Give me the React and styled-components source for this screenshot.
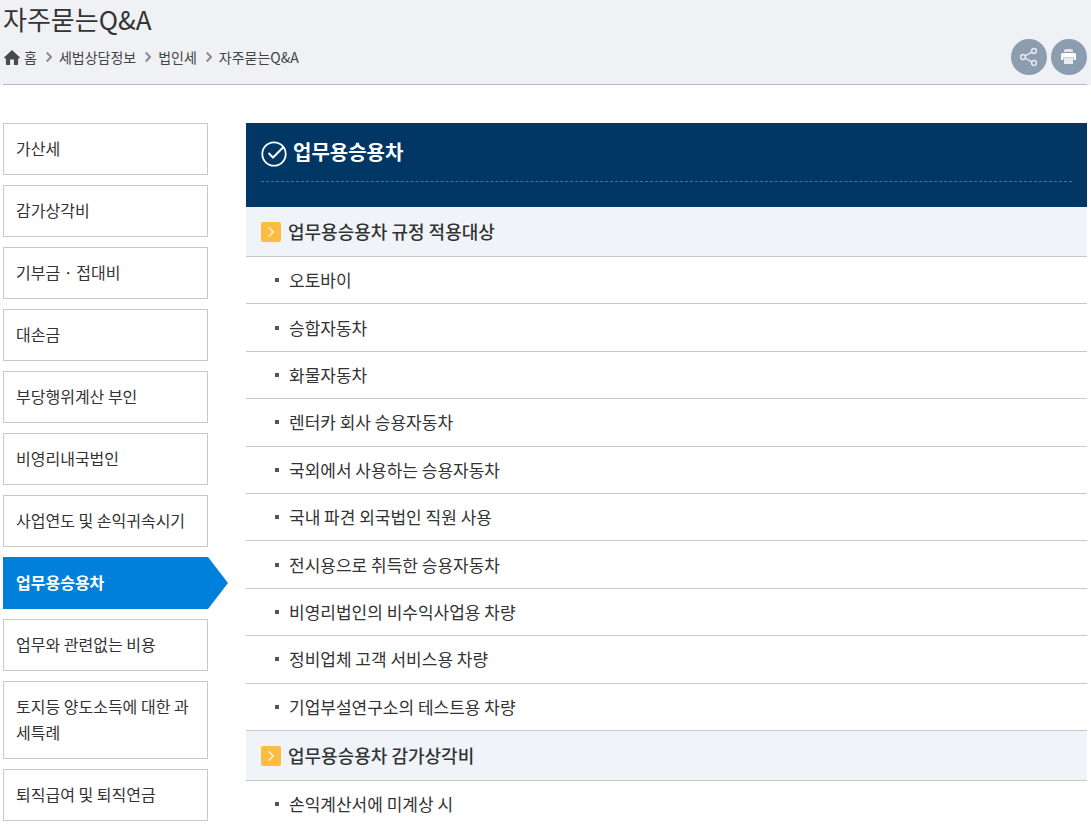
import React from "react";
import styled, { createGlobalStyle, css } from "styled-components";

const GlobalStyle = createGlobalStyle`
  *, *::before, *::after { box-sizing: border-box; }
  body {
    margin: 0;
    background: #fff;
    color: #333;
    font-family: "Noto Sans CJK KR", "Noto Sans", sans-serif;
    font-size: 16px;
    line-height: 26px;
  }
  ul, ol { list-style: none; margin: 0; padding: 0; }
  h1, h2, h3 { margin: 0; }
  a { color: inherit; text-decoration: none; }
`;

const PageHeader = styled.header`
  padding: 0 4px 0 3px;
  background: #eff1f5;
`;

const HeaderInner = styled.div`
  display: flex;
  justify-content: space-between;
  align-items: flex-end;
  padding-bottom: 9px;
  border-bottom: 1px solid #b2b6c0;
`;

const PageTitle = styled.h1`
  font-size: 26px;
  font-weight: 400;
  line-height: 38px;
`;

const Breadcrumb = styled.ol`
  display: flex;
  align-items: center;
  padding: 6px 0 5px 1px;
  color: #444;
  font-size: 14px;
  line-height: 26px;
`;

const Crumb = styled.li`
  display: flex;
  align-items: center;

  a {
    display: flex;
    align-items: center;
    gap: 4px;
  }
`;

const CrumbArrow = styled.svg`
  width: 6px;
  height: 12px;
  margin: 0 7px 0 9px;
  fill: none;
  stroke: #8a8d94;
  stroke-width: 2;
`;

const HomeIcon = styled.svg`
  width: 16px;
  height: 15px;
  fill: #4a4a4a;
`;

const Tools = styled.div`
  display: flex;
  gap: 4px;
`;

const RoundButton = styled.button`
  width: 36px;
  height: 36px;
  padding: 0;
  border: 0;
  border-radius: 50%;
  background: #8c9db0;
  cursor: pointer;

  svg { display: block; }
`;

const Body = styled.div`
  display: flex;
  align-items: flex-start;
  gap: 38px;
  padding: 38px 4px 5px 3px;
`;

const SideNav = styled.nav`
  flex: 0 0 205px;

  ul {
    display: flex;
    flex-direction: column;
    gap: 10px;
  }
`;

const SideLink = styled.a`
  position: relative;
  display: block;
  padding: 11px 12px 13px;
  border: 1px solid #c8c8c8;
  background: #fff;

  ${({ $active }) =>
    $active &&
    css`
      border-color: #0080db;
      background: #0080db;
      color: #fff;
      font-weight: 700;

      &::after {
        content: "";
        position: absolute;
        top: -1px;
        bottom: -1px;
        left: 100%;
        width: 21px;
        background: #0080db;
        clip-path: polygon(0 0, 1px 0, 100% 50%, 1px 100%, 0 100%);
      }
    `}
`;

const Content = styled.main`
  flex: 1;
  min-width: 0;
`;

const Banner = styled.div`
  padding: 14px 15px 25px;
  background: #003764;
`;

const BannerTitle = styled.h2`
  display: flex;
  align-items: center;
  gap: 6px;
  padding-bottom: 14px;
  border-bottom: 1px dashed #4d7399;
  color: #fff;
  font-size: 20px;
  font-weight: 700;
  line-height: 30px;
`;

const CheckIcon = styled.svg`
  width: 26px;
  height: 26px;
  margin-top: 4px;
  fill: none;
  stroke: #fff;
  stroke-width: 2;
`;

const SectionTitle = styled.h3`
  display: flex;
  align-items: center;
  gap: 7px;
  padding: 11px 15px 12px;
  border-bottom: 1px solid #c8c8c8;
  background: #f0f4f9;
  font-size: 18px;
  font-weight: 500;
  line-height: 26px;
`;

const SectionIcon = styled.svg`
  width: 20px;
  height: 20px;
  margin-top: 2px;
`;

const QuestionList = styled.ul`
  display: grid;
  grid-auto-rows: 1fr;
  min-height: ${({ $minHeight }) => $minHeight}px;
`;

const Question = styled.li`
  display: flex;
  align-items: center;
  padding: 10px 15px 10px 29px;
  border-bottom: 1px solid #c8c8c8;
  font-size: 17px;
  line-height: 26px;

  &::before {
    content: "";
    width: 4px;
    height: 4px;
    margin-right: 10px;
    background: #555;
  }
`;

const crumbs = ["홈", "세법상담정보", "법인세", "자주묻는Q&A"];

const categories = [
  "가산세",
  "감가상각비",
  "기부금 · 접대비",
  "대손금",
  "부당행위계산 부인",
  "비영리내국법인",
  "사업연도 및 손익귀속시기",
  "업무용승용차",
  "업무와 관련없는 비용",
  "토지등 양도소득에 대한 과세특례",
  "퇴직급여 및 퇴직연금",
];

const sections = [
  {
    title: "업무용승용차 규정 적용대상",
    minHeight: 474,
    questions: [
      "오토바이",
      "승합자동차",
      "화물자동차",
      "렌터카 회사 승용자동차",
      "국외에서 사용하는 승용자동차",
      "국내 파견 외국법인 직원 사용",
      "전시용으로 취득한 승용자동차",
      "비영리법인의 비수익사업용 차량",
      "정비업체 고객 서비스용 차량",
      "기업부설연구소의 테스트용 차량",
    ],
  },
  {
    title: "업무용승용차 감가상각비",
    minHeight: 47,
    questions: ["손익계산서에 미계상 시"],
  },
];

export default function App() {
  return (
    <>
      <GlobalStyle />
      <PageHeader>
        <HeaderInner>
          <div>
            <PageTitle>자주묻는Q&amp;A</PageTitle>
            <Breadcrumb>
              {crumbs.map((label, i) => (
                <Crumb key={label}>
                  {i > 0 && (
                    <CrumbArrow viewBox="0 0 6 12" aria-hidden="true">
                      <path d="M0.7 1.5 L5 6 L0.7 10.5" />
                    </CrumbArrow>
                  )}
                  <a href="#">
                    {i === 0 && (
                      <HomeIcon viewBox="0 0 17 15" preserveAspectRatio="none" aria-hidden="true">
                        <path d="M8.5 0 L17 7.6 L16 8.7 L15 7.9 V14 Q15 15 14 15 H10.5 V9.5 H6.5 V15 H3 Q2 15 2 14 V7.9 L1 8.7 L0 7.6 Z" />
                      </HomeIcon>
                    )}
                    {label}
                  </a>
                </Crumb>
              ))}
            </Breadcrumb>
          </div>
          <Tools>
            <RoundButton type="button" aria-label="공유">
              <svg width="36" height="36" viewBox="0 0 36 36" fill="none" stroke="#e6eaef" strokeWidth="1.5">
                <circle cx="12" cy="18" r="2.4" />
                <circle cx="23" cy="12" r="2.4" />
                <circle cx="23" cy="24" r="2.4" />
                <path d="M14.2 16.8 L20.9 13.2 M14.2 19.2 L20.9 22.8" />
              </svg>
            </RoundButton>
            <RoundButton type="button" aria-label="인쇄">
              <svg width="36" height="36" viewBox="0 0 36 36">
                <path fill="#dfe5eb" d="M13 12 Q13 10 15 10 H20 Q22 10 22 12 V13 H13 Z" />
                <path fill="#fff" d="M11.5 14 H23.5 Q25 14 25 15.5 V21 H22.7 V18.5 H12.3 V21 H10 V15.5 Q10 14 11.5 14 Z" />
                <path fill="#e9edf1" d="M13 19 H22 V25 H13 Z" />
              </svg>
            </RoundButton>
          </Tools>
        </HeaderInner>
      </PageHeader>
      <Body>
        <SideNav aria-label="법인세">
          <ul>
            {categories.map((label) => {
              const active = label === "업무용승용차";
              return (
                <li key={label}>
                  <SideLink href="#" $active={active} aria-current={active ? "page" : undefined}>
                    {label}
                  </SideLink>
                </li>
              );
            })}
          </ul>
        </SideNav>
        <Content>
          <Banner>
            <BannerTitle>
              <CheckIcon viewBox="0 0 26 26" aria-hidden="true">
                <circle cx="13" cy="13" r="11.7" strokeWidth="1.8" />
                <path d="M7.5 12 L12 16.5 L22.5 6" />
              </CheckIcon>
              업무용승용차
            </BannerTitle>
          </Banner>
          {sections.map((section) => (
            <section key={section.title}>
              <SectionTitle>
                <SectionIcon viewBox="0 0 20 20" aria-hidden="true">
                  <rect width="20" height="20" rx="2" fill="#fdbc40" />
                  <path d="M7.7 5.5 L12.2 10 L7.7 14.5" fill="none" stroke="#fff3d6" strokeWidth="1.5" />
                </SectionIcon>
                {section.title}
              </SectionTitle>
              <QuestionList $minHeight={section.minHeight}>
                {section.questions.map((question) => (
                  <Question key={question}>
                    <a href="#">{question}</a>
                  </Question>
                ))}
              </QuestionList>
            </section>
          ))}
        </Content>
      </Body>
    </>
  );
}
